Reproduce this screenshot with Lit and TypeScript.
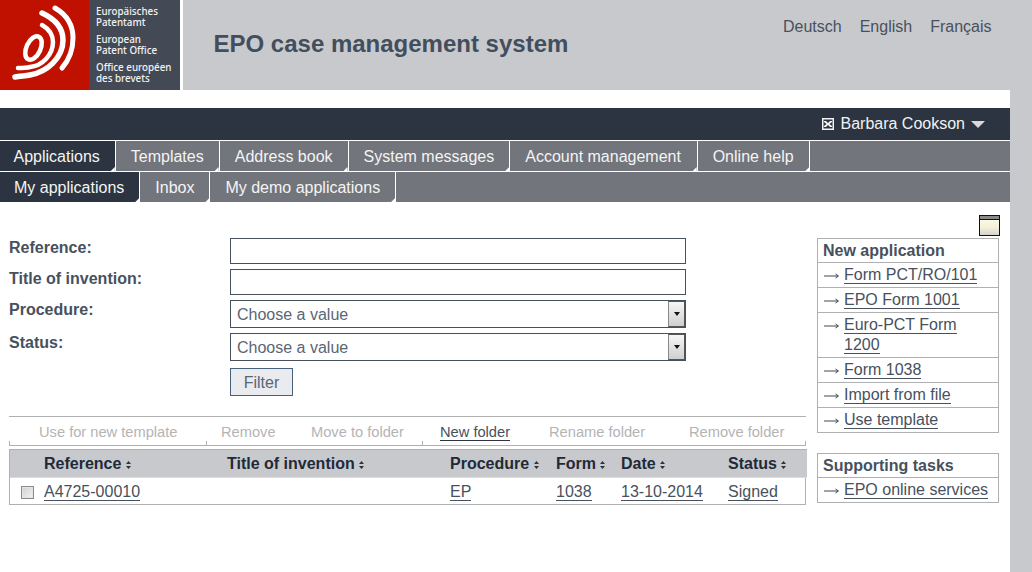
import { LitElement, css, html, svg } from 'lit'
import { customElement } from 'lit/decorators.js'

const NAV = ['Applications', 'Templates', 'Address book', 'System messages', 'Account management', 'Online help']
const SUBNAV = ['My applications', 'Inbox', 'My demo applications']
const NEW_APP = ['Form PCT/RO/101', 'EPO Form 1001', 'Euro-PCT Form 1200', 'Form 1038', 'Import from file', 'Use template']
const COLUMNS = ['Reference', 'Title of invention', 'Procedure', 'Form', 'Date', 'Status']
const ACTIONS = [
  { label: 'Use for new template', width: 197, pad: 30, tick: true },
  { label: 'Remove', width: 105, pad: 15, tick: true },
  { label: 'Move to folder', width: 111, pad: 0 },
  { label: 'New folder', width: 127, pad: 18, tick: true, on: true },
  { label: 'Rename folder', width: 140, pad: 0 },
  { label: 'Remove folder', width: 116, pad: 0 },
]

const sortIcon = html`<svg class="sort" width="5" height="8" viewBox="0 0 5 8"><path d="M2.5 0 5 3H0zM2.5 8 0 5h5z" /></svg>`

const arrow = html`<svg class="arrow" width="15" height="8" viewBox="0 0 15 8"><path d="M0 4h14M11.5 2 14.5 4l-3 2" fill="none" stroke="#3f4a56" stroke-width="1" /></svg>`

const logoMark = svg`
  <g fill="none" stroke="#fff" stroke-linecap="round">
    <ellipse cx="33.5" cy="48" rx="7" ry="12.5" transform="rotate(25 33.5 48)" stroke-width="4.5" />
    <path d="M42 25C49 29 53 35 53 42C53 55 42 66 30 67C26 68 21 68 18 68" stroke-width="4.5" />
    <path d="M42 13C55 19 63 28 63 40C63 58 47 72 30 75C25 76 20 76 15 77" stroke-width="5.5" />
    <path d="M55 8C67 15 73 26 73 38C73 50 69 60 62 68" stroke-width="5" />
  </g>
`

@customElement('app-root')
export class AppRoot extends LitElement {
  static styles = css`
    :host {
      display: flex;
      min-height: 572px;
      font: 16px/20px 'Liberation Sans', Arial, sans-serif;
      color: #47515e;
      background: #fff;
    }
    a {
      color: inherit;
      text-decoration: none;
    }
    .page {
      width: 1010px;
    }
    .strip {
      width: 22px;
      background: #c8c9cd;
    }
    .header {
      display: flex;
      height: 90px;
      gap: 3px;
    }
    .logo {
      display: flex;
      width: 180px;
      background: #434a56;
    }
    .logo svg {
      display: block;
      flex: none;
      background: #bf1000;
    }
    .logo-text {
      display: flex;
      flex-direction: column;
      gap: 6px;
      padding: 6px 0 0 7px;
      font: 500 9.8px/11px 'Noto Sans', sans-serif;
      color: #f2f2f2;
      white-space: nowrap;
    }
    .banner {
      flex: 1;
      display: flex;
      justify-content: space-between;
      background: #c8c9cd;
      padding: 0 18.5px 0 30.5px;
    }
    h1 {
      margin: 31px 0 0;
      font-size: 24px;
      line-height: 26px;
      font-weight: bold;
      color: #434e5c;
    }
    .langs {
      display: flex;
      gap: 18px;
      padding-top: 17px;
    }
    .userbar {
      display: flex;
      justify-content: flex-end;
      align-items: center;
      gap: 6px;
      height: 32px;
      margin-top: 18px;
      padding-right: 25px;
      background: #2b3440;
      color: #f2f2f2;
    }
    .user-icon {
      display: block;
    }
    .caret {
      width: 0;
      height: 0;
      border: 7.5px solid transparent;
      border-top: 7px solid #d8d9dc;
      border-bottom: 0;
    }
    .tabs {
      display: flex;
      height: 30px;
      margin-top: 1px;
      background: #72757b;
    }
    .tab {
      position: relative;
      padding: 0 15px;
      line-height: 31px;
      color: #f4f4f4;
      border-right: 1px solid #fff;
    }
    .tab::after {
      content: '';
      position: absolute;
      right: 0;
      bottom: 0;
      width: 4px;
      height: 4px;
      background: #fff;
      clip-path: polygon(100% 0, 100% 100%, 0 100%);
    }
    .tab.active {
      background: #2b3440;
      padding-left: 14px;
    }
    .tabs.top .tab.active {
      padding-left: 13.5px;
    }
    .tabs.top .tab:nth-child(n + 5) {
      padding-right: 15.75px;
    }
    .main {
      display: flex;
      gap: 11px;
      padding: 36px 11px 0 9px;
    }
    .left {
      width: 797px;
    }
    .form {
      display: grid;
      grid-template-columns: 221px 456px;
      grid-template-rows: 26px 26px 28px 28px 28px;
      row-gap: 5px;
      height: 158px;
    }
    label {
      font-weight: bold;
      color: #47515e;
      line-height: 20px;
    }
    .field {
      box-sizing: border-box;
      width: 456px;
      margin: 0;
      border: 1px solid #47515e;
      background: #fff;
      outline: none;
    }
    .select {
      display: flex;
      justify-content: space-between;
      padding-left: 6px;
      line-height: 27px;
      color: #5a6675;
    }
    .select-btn {
      box-sizing: border-box;
      display: flex;
      align-items: center;
      justify-content: center;
      width: 17px;
      border: 1px solid #555;
      border-left-color: #888;
      background: linear-gradient(#f6f6f6, #cfcfcf);
    }
    .select-btn i {
      width: 0;
      height: 0;
      border: 3.5px solid transparent;
      border-top: 4px solid #111;
      border-bottom: 0;
    }
    button {
      grid-column: 2;
      justify-self: start;
      box-sizing: border-box;
      width: 63px;
      height: 28px;
      margin-top: 2px;
      padding: 2px 0 0;
      border: 1px solid #47617a;
      background: #e9ebee;
      font: inherit;
      color: #5a6675;
    }
    .actions {
      box-sizing: border-box;
      position: relative;
      display: flex;
      height: 30px;
      margin-top: 20px;
      border-top: 1px solid #b0b0b0;
      border-bottom: 1px solid #b0b0b0;
      font-size: 14.67px;
      color: #b4b4b4;
      line-height: 30px;
    }
    .actions::after {
      content: '';
      position: absolute;
      right: 0;
      bottom: 0;
      height: 4px;
      border-left: 1px solid #b0b0b0;
    }
    .action {
      position: relative;
      box-sizing: border-box;
      white-space: nowrap;
    }
    .action.tick::before {
      content: '';
      position: absolute;
      left: 0;
      bottom: 0;
      height: 4px;
      border-left: 1px solid #b0b0b0;
    }
    .action.on {
      color: #47515e;
    }
    .action.on span {
      border-bottom: 1px solid #2b3440;
    }
    .grid {
      display: grid;
      grid-template-columns: 34px 183px 223px 106px 65px 107px 79px;
      margin-top: 3px;
      border: 1px solid #b0b0b0;
      border-top: 0;
    }
    .th {
      height: 28px;
      margin-bottom: 3px;
      line-height: 29px;
      font-weight: bold;
      color: #1f2a38;
      background: #c8c9cd;
      white-space: nowrap;
      box-shadow: inset 0 1px 0 #b0b0b0, 0 1px 0 #dcdcdc;
    }
    .sort {
      fill: #2b3440;
    }
    .td {
      height: 24px;
      line-height: 24px;
    }
    .td a,
    .side-row a {
      border-bottom: 1px solid #47515e;
    }
    .check {
      display: flex;
      align-items: center;
      justify-content: flex-end;
      padding-right: 10px;
    }
    .check i {
      box-sizing: border-box;
      width: 13px;
      height: 13px;
      border: 1px solid #8a8a8a;
      background: linear-gradient(135deg, #d0d0d0, #f2f2f2);
      box-shadow: inset 0 0 0 1px #e4e4e4;
    }
    .right {
      width: 182px;
    }
    .toggle {
      box-sizing: border-box;
      width: 21px;
      height: 21px;
      margin: -23px 0 2px 162px;
      border: 1px solid #111;
      background: linear-gradient(#8a8a8a 3px, #111 3px, #111 4px, #fbf8e4 4px, #f4f0d8 60%, #d4d4d0);
    }
    .side {
      border: 1px solid #b0b0b0;
      margin-bottom: 20px;
    }
    .side-head {
      height: 23px;
      line-height: 23px;
      padding-left: 5px;
      font-weight: bold;
    }
    .side-row {
      display: flex;
      border-top: 1px solid #b0b0b0;
      padding: 2px 5px 2px 6px;
      line-height: 20px;
      min-height: 20px;
    }
    .arrow {
      flex: none;
      margin: 7px 5px 0 0;
    }
  `

  private renderTabs(items: string[], extra = '') {
    return html`
      <nav class="tabs ${extra}">
        ${items.map((label, i) => html`<a class="tab ${i === 0 ? 'active' : ''}">${label}</a>`)}
      </nav>
    `
  }

  private renderSide(title: string, items: string[]) {
    return html`
      <section class="side">
        <div class="side-head">${title}</div>
        ${items.map((item) => html`<div class="side-row">${arrow}<span><a>${item}</a></span></div>`)}
      </section>
    `
  }

  render() {
    return html`
      <div class="page">
        <header class="header">
          <div class="logo">
            <svg width="89" height="90" viewBox="0 0 89 90">${logoMark}</svg>
            <div class="logo-text">
              <div>Europäisches<br />Patentamt</div>
              <div>European<br />Patent Office</div>
              <div>Office européen<br />des brevets</div>
            </div>
          </div>
          <div class="banner">
            <h1>EPO case management system</h1>
            <div class="langs"><a>Deutsch</a><a>English</a><a>Français</a></div>
          </div>
        </header>

        <div class="userbar">
          <svg class="user-icon" width="12" height="12" viewBox="0 0 12 12">
            <rect width="12" height="12" fill="#f2f2f2" />
            <rect x="1.5" y="1.5" width="9" height="9" fill="#2b3440" />
            <path d="M2 3h2l2 2 2-2h2v1L7.5 6 10 8v1H8L6 7 4 9H2V8l2.5-2L2 4z" fill="#f2f2f2" />
          </svg>
          <span>Barbara Cookson</span>
          <i class="caret"></i>
        </div>
        ${this.renderTabs(NAV, 'top')} ${this.renderTabs(SUBNAV)}

        <main class="main">
          <div class="left">
            <form class="form">
              <label>Reference:</label>
              <input class="field" />
              <label>Title of invention:</label>
              <input class="field" />
              <label>Procedure:</label>
              <div class="field select">Choose a value<span class="select-btn"><i></i></span></div>
              <label>Status:</label>
              <div class="field select">Choose a value<span class="select-btn"><i></i></span></div>
              <button type="button">Filter</button>
            </form>

            <div class="actions">
              ${ACTIONS.map(
                (a) => html`<div
                  class="action ${a.on ? 'on' : ''} ${a.tick ? 'tick' : ''}"
                  style="width:${a.width}px;padding-left:${a.pad}px"
                ><span>${a.label}</span></div>`,
              )}
            </div>

            <div class="grid">
              <div class="th"></div>
              ${COLUMNS.map((c) => html`<div class="th">${c} ${sortIcon}</div>`)}
              <div class="td check"><i></i></div>
              <div class="td"><a>A4725-00010</a></div>
              <div class="td"></div>
              <div class="td"><a>EP</a></div>
              <div class="td"><a>1038</a></div>
              <div class="td"><a>13-10-2014</a></div>
              <div class="td"><a>Signed</a></div>
            </div>
          </div>

          <aside class="right">
            <div class="toggle"></div>
            ${this.renderSide('New application', NEW_APP)}
            ${this.renderSide('Supporting tasks', ['EPO online services'])}
          </aside>
        </main>
      </div>
      <div class="strip"></div>
    `
  }
}

declare global {
  interface HTMLElementTagNameMap {
    'app-root': AppRoot
  }
}
